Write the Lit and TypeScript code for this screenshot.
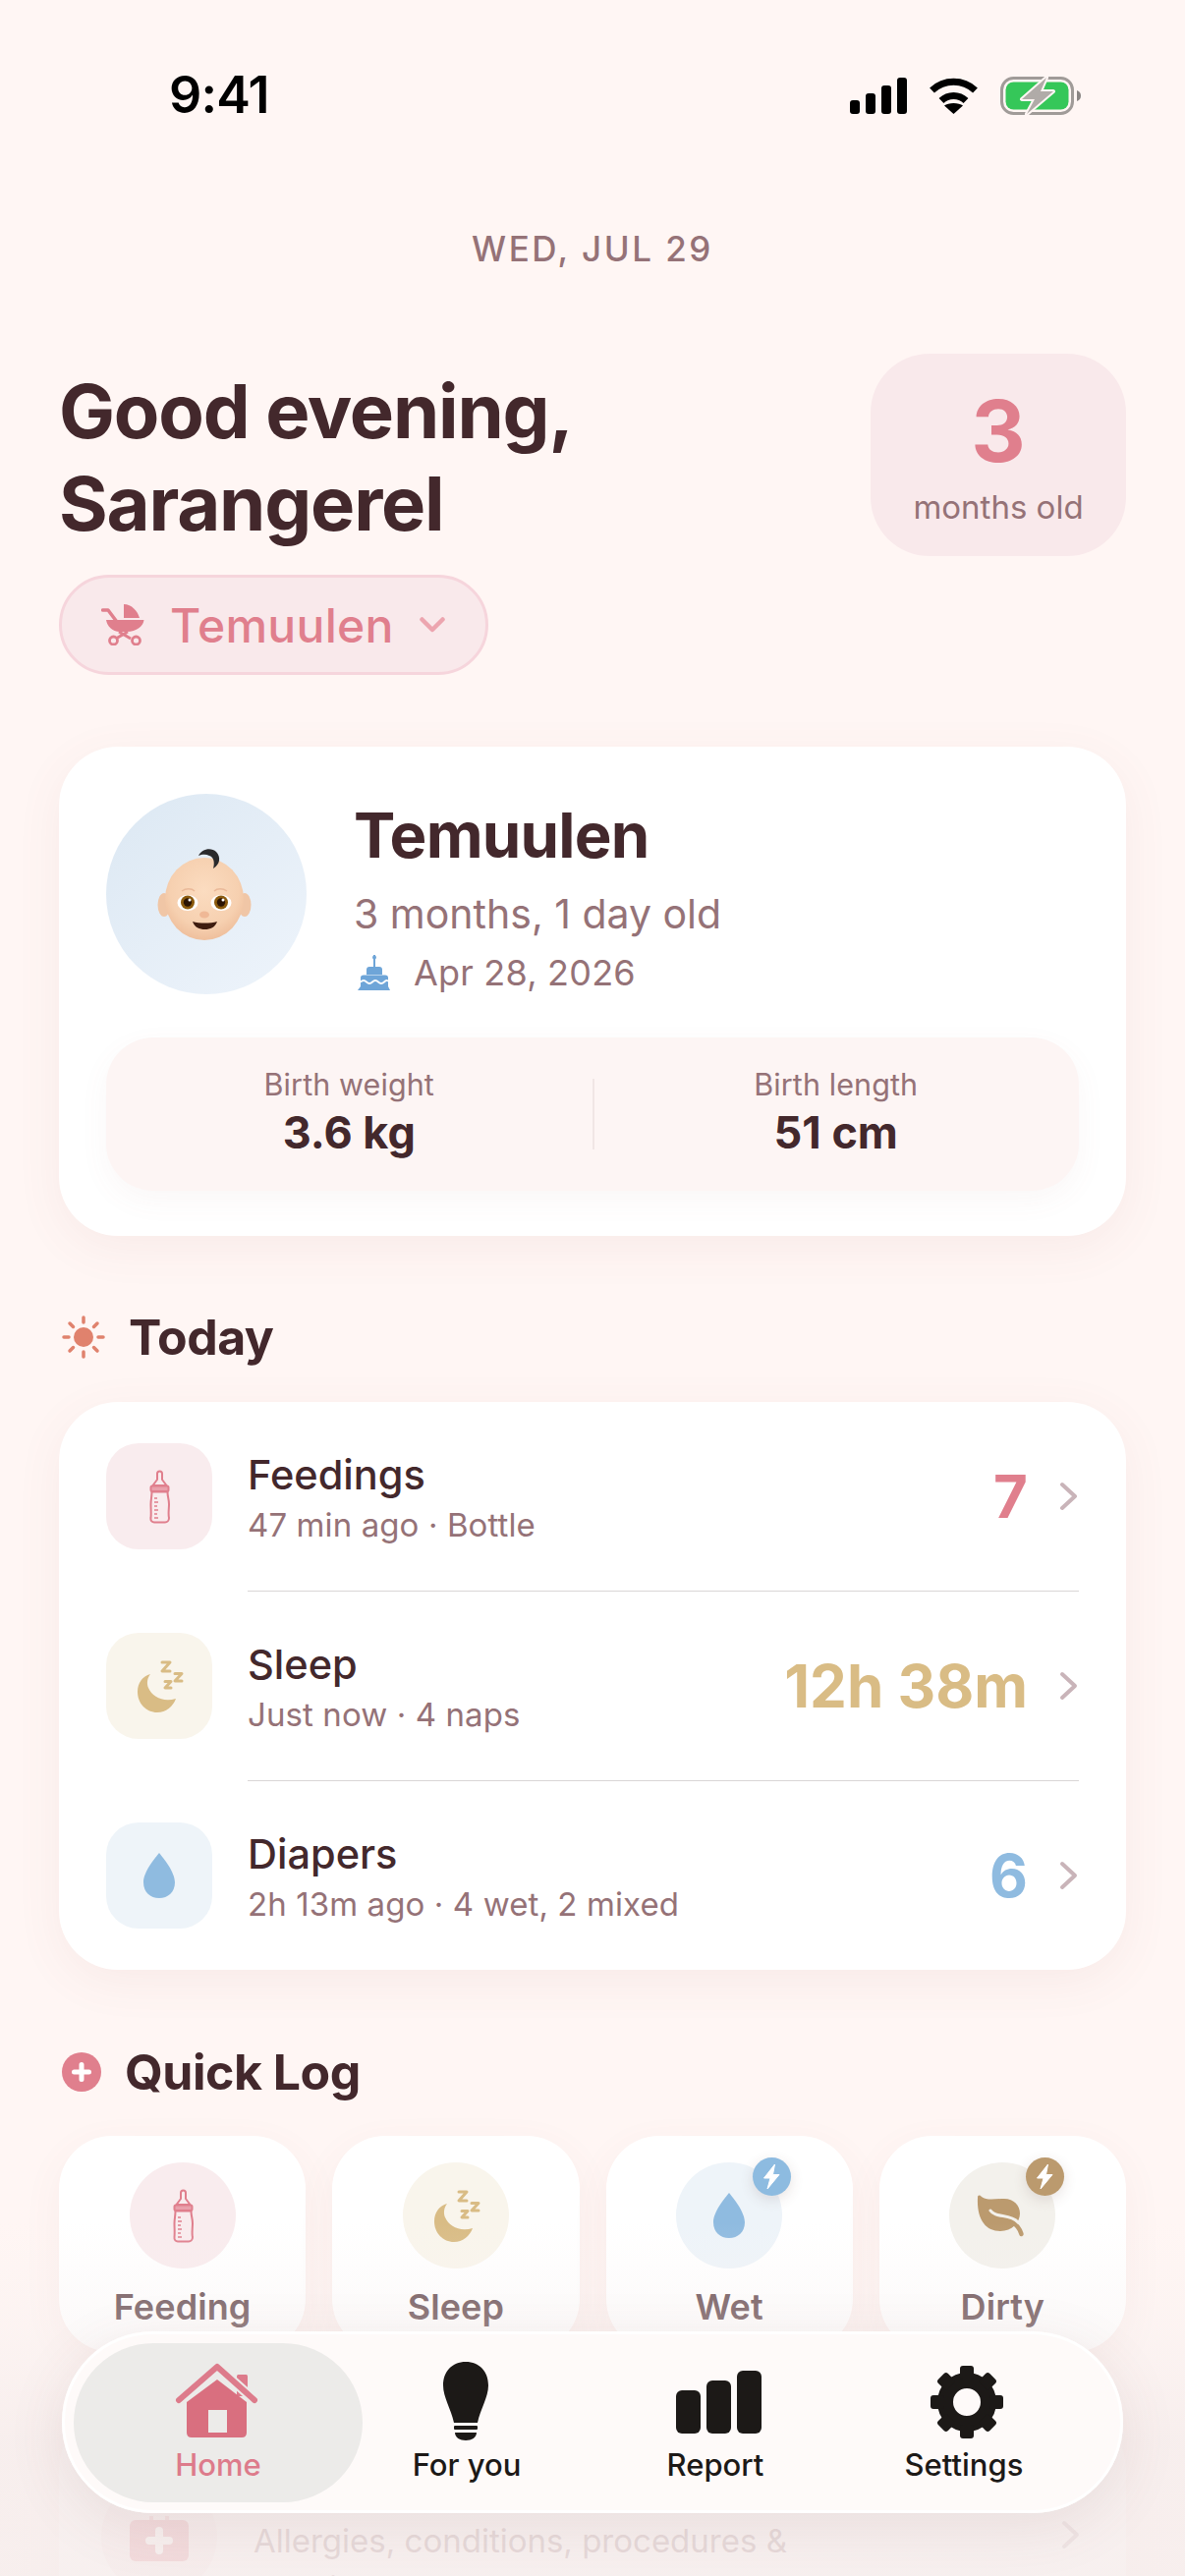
import { LitElement, html, svg, css } from "lit";
import { customElement } from "lit/decorators.js";

const bottle = html`<svg class="glyph" viewBox="0 0 108 108" fill="none" stroke="#e07f8d" stroke-width="2" stroke-linejoin="round"><path d="M52 37V31C52 27.500 57 27.500 57 31V37L61.500 43H47.500Z"/><rect x="45.500" y="43.500" width="18" height="5.500" rx="1.500" fill="#e9a0ab"/><path d="M46.500 49.500H62.500C62.500 55 64 57 64 62C64 67 63 72 64 76C64 79 62 80.500 60 80.500H49C47 80.500 45 79 45.500 76C46 72 45.500 67 45.500 62C45.500 57 46.500 55 46.500 49.500Z"/><path d="M49 56H52M49 60H53M49 64H52M49 68H53M49 72H52M49 76H53" stroke-width="1.500"/></svg>`;
const moon = html`<svg class="glyph" viewBox="0 0 108 108" fill="none"><path fill="#d9bc85" d="M45 42C37 44 32 51 32 60C32 72 41 81 52 81C61 81 68 75 71 67C58 71 47 65 43 56C41 51 42 46 45 42Z"/><path stroke="#d9bc85" stroke-width="3" stroke-linejoin="round" stroke-linecap="round" d="M57 30H65L57 39H65M70 41.500H77L70 49H77M60 49.500H66L60 56H66"/></svg>`;
const drop = html`<svg class="glyph" viewBox="0 0 108 108"><path fill="#8fbbe0" d="M54 31C58 36 70 50 70 61C70 71 63 77 54 77C45 77 38 71 38 61C38 50 50 36 54 31Z"/></svg>`;
const leaf = html`<svg class="glyph" viewBox="0 0 108 108" fill="none"><path fill="#bb9a6e" d="M29 36C29 33 31 33 33 35C38 39 47 37 56 37C66 37 72 44 72 52C72 61 64 70 52 70C37 70 28 58 29 36Z"/><path stroke="#bb9a6e" stroke-width="4.500" stroke-linecap="round" d="M64 61C68 63 72 68 73.500 73"/><path stroke="#f3f1ec" stroke-width="3" stroke-linecap="round" d="M42 49C47 57 62 52 70 61"/></svg>`;
const bolt = html`<svg viewBox="0 0 39 39"><path fill="#fff" d="M22.500 7L11.500 21H18L15 32L27 17.500H20.500Z" stroke="#fff" stroke-width="1" stroke-linejoin="round"/></svg>`;
const chevron = html`<svg class="chev" viewBox="0 0 21 30" fill="none"><path d="M4 3L17 15L4 27" stroke="#c9b4b9" stroke-width="4" stroke-linecap="round" stroke-linejoin="round"/></svg>`;

const teeth = [0, 45, 90, 135, 180, 225, 270, 315];

const rows = [
  { tint: "rose", icon: bottle, title: "Feedings", sub: "47 min ago · Bottle", value: "7", color: "rose" },
  { tint: "gold", icon: moon, title: "Sleep", sub: "Just now · 4 naps", value: "12h 38m", color: "gold" },
  { tint: "blue", icon: drop, title: "Diapers", sub: "2h 13m ago · 4 wet, 2 mixed", value: "6", color: "blue" },
];

const quick = [
  { tint: "rose", icon: bottle, label: "Feeding", badge: "" },
  { tint: "gold", icon: moon, label: "Sleep", badge: "" },
  { tint: "blue", icon: drop, label: "Wet", badge: "badge-blue" },
  { tint: "brown", icon: leaf, label: "Dirty", badge: "badge-brown" },
];

@customElement("app-root")
export class AppRoot extends LitElement {
  static styles = css`
    :host { display: block; }
    * { box-sizing: border-box; }
    .screen {
      position: relative; width: 1206px; height: 2622px; overflow: hidden;
      background: #fff6f4; color: #43282c;
      font-family: Inter, "Noto Sans", sans-serif;
    }
    .status { height: 194px; display: flex; align-items: center; justify-content: space-between; padding: 0 106px 0 172px; }
    .time { font-size: 52px; font-weight: 600; color: #000; line-height: 60px; letter-spacing: -0.8px; }
    .status-icons { display: flex; align-items: center; margin-top: 1px; }
    .status-icons svg { display: block; }
    .wifi { margin: 0 22px; }
    .date { margin-top: 37px; margin-bottom: -1px; text-align: center; font-size: 35px; line-height: 44px; font-weight: 500; letter-spacing: 2.5px; color: #957277; }
    .head { margin-top: 86px; padding: 0 60px; display: flex; justify-content: space-between; align-items: flex-start; }
    h1 { margin: 11px 0 0; font-size: 76px; line-height: 94px; font-weight: 700; letter-spacing: -1.2px; }
    .pill { margin-top: 26px; display: inline-flex; align-items: center; height: 102px; padding: 0 41px 0 40px; gap: 26px; background: #f9e9eb; border: 3px solid #f6d5dc; border-radius: 51px; color: #e07f8d; font-size: 48px; font-weight: 500; letter-spacing: 0.3px; }
    .pill svg { display: block; }
    .age { width: 260px; height: 206px; border-radius: 60px; background: #f9e9eb; display: flex; flex-direction: column; align-items: center; }
    .age b { margin-top: 34px; font-size: 86px; line-height: 90px; font-weight: 700; color: #e07f8d; }
    .age span { margin-top: 11px; font-size: 33px; line-height: 42px; color: #957277; }
    .card { background: #fff; border-radius: 60px; box-shadow: 0 12px 48px rgba(150, 90, 90, 0.07); margin: 0 60px; }
    .profile { margin-top: 73px; padding: 48px; height: 498px; }
    .who { display: flex; gap: 48px; }
    .avatar { width: 204px; height: 204px; border-radius: 50%; background: linear-gradient(140deg, #dce8f3, #eef4fb); display: flex; align-items: center; justify-content: center; }
    .avatar svg { display: block; margin-left: -2px; margin-top: 2px; }
    .name { margin-top: 2px; font-size: 63.5px; line-height: 80px; font-weight: 700; letter-spacing: -0.8px; }
    .age-line { margin-top: 15px; font-size: 41px; line-height: 50px; color: #957277; }
    .born { margin-top: 11px; display: flex; align-items: center; gap: 21px; font-size: 36px; line-height: 48px; color: #957277; letter-spacing: 0.2px; padding-left: 2px; }
    .stats { margin-top: 42px; height: 156px; border-radius: 48px; background: #fdf5f4; box-shadow: 0 10px 30px rgba(150, 90, 90, 0.05); display: grid; grid-template-columns: 1fr 1px 1fr; align-items: center; text-align: center; }
    .stat { padding-bottom: 5px; }
    .rule { width: 2px; height: 72px; background: #f1e6e5; }
    .stat-l { font-size: 30.5px; line-height: 40px; color: #957277; letter-spacing: 0.1px; }
    .stat-v { margin-top: 3px; font-size: 45px; line-height: 52px; font-weight: 700; }
    .sec { display: flex; align-items: center; padding-left: 63px; height: 60px; font-size: 50px; font-weight: 700; letter-spacing: -0.5px; }
    .sec svg { display: block; }
    .sec-today { margin-top: 73px; gap: 24px; }
    .sec-quick { margin-top: 74px; gap: 24px; }
    .list { margin-top: 36px; }
    .row { height: 192px; display: flex; align-items: center; padding: 0 48px; gap: 36px; }
    .tile { width: 108px; height: 108px; border-radius: 33px; flex: none; position: relative; }
    .glyph { display: block; width: 108px; height: 108px; }
    .rose { background: #f9ecee; }
    .gold { background: #f9f5ec; }
    .blue { background: #eef4f9; }
    .brown { background: #f3f1ec; }
    .text { flex: 1; padding-top: 3px; }
    .title { font-size: 41.500px; line-height: 52px; font-weight: 500; }
    .sub { margin-top: 3px; font-size: 33px; line-height: 44px; color: #957277; letter-spacing: 0.1px; }
    .val { font-size: 60px; font-weight: 700; line-height: 70px; margin-right: -1px; }
    .val.rose { background: none; color: #e07f8d; }
    .val.gold { background: none; color: #d9bc85; }
    .val.blue { background: none; color: #8fbbe0; }
    .chev { display: block; width: 21px; height: 30px; flex: none; margin-left: -4px; }
    .sep { height: 1px; margin: 0 48px 0 192px; background: #d9d6d6; }
    .quick { margin: 35px 60px 0; display: grid; grid-template-columns: repeat(4, 1fr); gap: 27px; }
    .q { height: 220px; background: #fff; border-radius: 54px; box-shadow: 0 12px 40px rgba(150, 90, 90, 0.06); display: flex; flex-direction: column; align-items: center; padding-top: 27px; }
    .circle { width: 108px; height: 108px; border-radius: 50%; position: relative; }
    .q-label { margin-top: 17px; font-size: 36px; line-height: 44px; font-weight: 600; color: #6a5054; letter-spacing: 0.1px; }
    .badge { position: absolute; top: -5px; right: -9px; width: 39px; height: 39px; border-radius: 50%; box-shadow: 0 4px 14px rgba(90, 60, 50, 0.14); }
    .badge svg { display: block; }
    .badge-blue { background: #8dbbe0; }
    .badge-brown { background: #bb9a6e; }
    .history { margin-top: 60px; height: 300px; display: flex; align-items: flex-start; padding: 69px 46px 0 43px; gap: 37px; }
    .kit-tile { width: 118px; height: 118px; flex: none; border-radius: 50%; background: #f9ecee; display: flex; align-items: center; justify-content: center; }
    .kit-tile svg { display: block; margin-top: 2px; }
    .hist-text { flex: 1; margin-top: 39px; font-size: 33px; line-height: 48px; color: #957277; }
    .hist-text span { display: block; }
    .hist-chev { margin-top: 42px; }
    .veil { position: absolute; left: 0; right: 0; bottom: 0; height: 360px; pointer-events: none; background: linear-gradient(rgba(246, 238, 237, 0), rgba(246, 238, 237, 0.3) 30%, rgba(246, 237, 236, 0.84) 62%); }
    .nav { position: absolute; left: 63px; bottom: 64px; width: 1080px; height: 185px; border-radius: 92px; background: #fefaf9; box-shadow: inset 0 0 0 3px rgba(255, 255, 255, 0.9), 0 14px 60px rgba(110, 70, 70, 0.1); display: grid; grid-template-columns: repeat(4, 253px); padding: 12px 0 11px 32.5px; }
    .item { display: flex; flex-direction: column; align-items: center; padding-top: 19px; color: #1c1917; font-size: 31px; font-weight: 500; }
    .item svg { display: block; }
    .item span { margin-top: 7px; line-height: 36px; }
    .home { margin: 0 -20.5px; border-radius: 81px; background: #ecebe9; color: #dd7b8b; }
  `;

  render() {
    return html`<div class="screen">
      <div class="status">
        <div class="time">9:41</div>
        <div class="status-icons">
          <svg width="58" height="37" viewBox="0 0 58 37" fill="#000"><rect y="23" width="10" height="14" rx="3"/><rect x="16" y="16" width="10" height="21" rx="3"/><rect x="32" y="8" width="10" height="29" rx="3"/><rect x="48" width="10" height="37" rx="3"/></svg>
          <svg class="wifi" width="51" height="37" viewBox="0 0 51 37" fill="none"><path d="M3.500 13A32 32 0 0 1 47.500 13" stroke="#000" stroke-width="7"/><path d="M13 23.500A18 18 0 0 1 38 23.500" stroke="#000" stroke-width="7"/><path d="M25.500 37L16 28.500C20 25 31 25 35 28.500Z" fill="#000"/></svg>
          <svg width="82" height="39" viewBox="0 0 82 39" fill="none"><rect x="1.500" y="1.500" width="72" height="36" rx="12" stroke="#a09b98" stroke-width="3"/><rect x="5.500" y="5.500" width="64" height="28" rx="8" fill="#35c759"/><path d="M78 14C81 15 82 17 82 19.500C82 22 81 24 78 25Z" fill="#8a8583"/><path d="M47 1L22 23H35L27 38L54 15H41Z" fill="#b0aba8" stroke="#fff6f4" stroke-width="4" stroke-linejoin="round" paint-order="stroke"/></svg>
        </div>
      </div>

      <div class="date">WED, JUL 29</div>

      <div class="head">
        <div>
          <h1>Good evening,<br />Sarangerel</h1>
          <div class="pill">
            <svg width="44" height="42" viewBox="0 0 44 42" fill="none"><path d="M23 0C31 0 37 7 39 14H23Z" fill="#e07f8d"/><path d="M1.500 6H7L16 18" stroke="#e07f8d" stroke-width="3.500" stroke-linecap="round" stroke-linejoin="round"/><path d="M5 16H43.500C43 22 36 28 26 28H19C11 28 6 22 5 16Z" fill="#e07f8d"/><path d="M18 28L30 35M27 28L15 35" stroke="#e07f8d" stroke-width="3"/><circle cx="12.500" cy="37" r="4" stroke="#e07f8d" stroke-width="2.800"/><circle cx="35.500" cy="37" r="4" stroke="#e07f8d" stroke-width="2.800"/></svg>
            <span>Temuulen</span>
            <svg width="26" height="16" viewBox="0 0 26 16" fill="none"><path d="M2.500 2.500L13 13L23.500 2.500" stroke="#eca5af" stroke-width="4.500" stroke-linecap="round" stroke-linejoin="round"/></svg>
          </div>
        </div>
        <div class="age"><b>3</b><span>months old</span></div>
      </div>

      <div class="card profile">
        <div class="who">
          <div class="avatar">
            <svg width="100" height="100" viewBox="0 0 100 100">
              <defs><radialGradient id="skin" cx="50%" cy="40%" r="62%"><stop offset="0%" stop-color="#fbdcc0"/><stop offset="70%" stop-color="#f6d0b0"/><stop offset="100%" stop-color="#eebd9a"/></radialGradient></defs>
              <ellipse cx="8" cy="60" rx="6.500" ry="12" fill="#f0c6a6"/><ellipse cx="90" cy="60" rx="6.500" ry="12" fill="#f0c6a6"/>
              <ellipse cx="49" cy="54" rx="40" ry="42" fill="url(#skin)"/>
              <path d="M43 10C46 3 56 1 61 6C66 11 65 19 58 23C60 16 58 11 54 10C50 8 46 9 43 10Z" fill="#2a2a2c"/>
              <path d="M26 46C30 43 36 43 39 46M59 46C62 43 68 43 72 46" stroke="#eab999" stroke-width="1.500" fill="none"/>
              <ellipse cx="32" cy="58" rx="10.500" ry="8" fill="#fff"/><ellipse cx="66" cy="58" rx="10.500" ry="8" fill="#fff"/>
              <circle cx="32" cy="57.500" r="7" fill="#8a5a0e"/><circle cx="66" cy="57.500" r="7" fill="#8a5a0e"/>
              <circle cx="32" cy="57.500" r="4.200" fill="#2b1505"/><circle cx="66" cy="57.500" r="4.200" fill="#2b1505"/>
              <circle cx="34" cy="55" r="1.500" fill="#fff"/><circle cx="68" cy="55" r="1.500" fill="#fff"/>
              <ellipse cx="49" cy="70" rx="5" ry="3.500" fill="#efb896"/>
              <path d="M37 77C44 79 55 79 62 77C60 83 55 85 49.500 85C44 85 39 83 37 77Z" fill="#3e1c0f"/>
            </svg>
          </div>
          <div>
            <div class="name">Temuulen</div>
            <div class="age-line">3 months, 1 day old</div>
            <div class="born">
              <svg width="38" height="36" viewBox="0 0 38 36" fill="#6ea5d8"><rect x="18" y="0" width="2" height="12"/><circle cx="19" cy="2.500" r="2"/><path d="M11 15Q11 12 14 12H24Q27 12 27 15V20H11Z"/><path d="M5 23Q5 20.500 8 20.500H30Q33 20.500 33 23V32L35 36H2L5 32Z"/><path d="M5 27.500Q8 24.500 11 27.500T17 27.500T23 27.500T29 27.500T33 27" fill="none" stroke="#fff" stroke-width="1.800"/></svg>
              <span>Apr 28, 2026</span>
            </div>
          </div>
        </div>
        <div class="stats">
          <div class="stat"><div class="stat-l">Birth weight</div><div class="stat-v">3.6 kg</div></div>
          <div class="rule"></div>
          <div class="stat"><div class="stat-l">Birth length</div><div class="stat-v">51 cm</div></div>
        </div>
      </div>

      <div class="sec sec-today">
        <svg width="44" height="44" viewBox="0 0 44 44" fill="#e0826d" stroke="#e0826d" stroke-linecap="round"><circle cx="22" cy="22" r="10" stroke="none"/><path stroke-width="3.500" fill="none" d="M22 2V7M22 37V42M2 22H7M37 22H42M8 8L11.500 11.500M32.500 32.500L36 36M8 36L11.500 32.500M32.500 11.500L36 8"/></svg>
        <span>Today</span>
      </div>

      <div class="card list">
        ${rows.map((r, i) => html`
          ${i ? html`<div class="sep"></div>` : ""}
          <div class="row">
            <div class="tile ${r.tint}">${r.icon}</div>
            <div class="text"><div class="title">${r.title}</div><div class="sub">${r.sub}</div></div>
            <div class="val ${r.color}">${r.value}</div>
            ${chevron}
          </div>`)}
      </div>

      <div class="sec sec-quick">
        <svg width="40" height="40" viewBox="0 0 40 40"><circle cx="20" cy="20" r="20" fill="#e07f8d"/><path d="M20 12.500V27.500M12.500 20H27.500" stroke="#fff" stroke-width="5" stroke-linecap="round"/></svg>
        <span>Quick Log</span>
      </div>

      <div class="quick">
        ${quick.map((q) => html`<div class="q">
          <div class="circle ${q.tint}">
            ${q.icon}
            ${q.badge ? html`<div class="badge ${q.badge}">${bolt}</div>` : ""}
          </div>
          <div class="q-label">${q.label}</div>
        </div>`)}
      </div>

      <div class="card history">
        <div class="kit-tile">
          <svg width="60" height="48" viewBox="0 0 60 48"><path d="M20 7V2H24V7M36 7V2H40V7" fill="#e9a6ae"/><rect y="6" width="60" height="42" rx="6" fill="#e07f8d"/><path d="M30 17V37M20 27H40" stroke="#fff" stroke-width="8" stroke-linecap="round"/></svg>
        </div>
        <div class="hist-text"><span>Allergies, conditions, procedures &amp;</span><span>hospital stays</span></div>
        <svg class="chev hist-chev" viewBox="0 0 21 30" fill="none"><path d="M4 3L17 15L4 27" stroke="#c9b4b9" stroke-width="4" stroke-linecap="round" stroke-linejoin="round"/></svg>
      </div>

      <div class="veil"></div>

      <nav class="nav">
        <div class="item home">
          <svg width="100" height="80" viewBox="0 0 100 80" fill="none">
            <rect x="69" y="13" width="11" height="22" rx="1.500" fill="#dd7b8b"/>
            <path d="M49 18L79 41V72Q79 77 74 77H23Q18 77 18 72V41Z" fill="#d96f7f"/>
            <rect x="40" y="49" width="19" height="23" fill="#ecebe9"/>
            <path d="M10 39L49 5L87 39" stroke="#ecebe9" stroke-width="10" stroke-linejoin="round"/>
            <path d="M10 39L49 5L87 39" stroke="#dd7b8b" stroke-width="6" stroke-linecap="round" stroke-linejoin="round"/>
          </svg>
          <span>Home</span>
        </div>
        <div class="item">
          <svg width="100" height="80" viewBox="0 0 100 80" fill="#1c1917"><path d="M49 0C63 0 72 10 72 24C72 36 64 48 61 62H37C34 48 26 36 26 24C26 10 35 0 49 0Z"/><rect x="37" y="65" width="24" height="4" rx="1"/><path d="M38 72H60C60 77 55 80 49 80C43 80 38 77 38 72Z"/></svg>
          <span>For you</span>
        </div>
        <div class="item">
          <svg width="100" height="80" viewBox="0 0 100 80" fill="#1c1917"><rect x="10" y="29" width="25" height="44" rx="6"/><rect x="41" y="19" width="25" height="54" rx="6"/><rect x="72" y="9" width="25" height="64" rx="6"/></svg>
          <span>Report</span>
        </div>
        <div class="item">
          <svg width="100" height="80" viewBox="0 0 100 80" fill="none">
            <circle cx="53" cy="41" r="22" stroke="#1c1917" stroke-width="16"/>
            ${teeth.map((a) => svg`<rect x="46" y="4" width="14" height="14" rx="3" fill="#1c1917" transform="rotate(${a} 53 41)"/>`)}
          </svg>
          <span>Settings</span>
        </div>
      </nav>
    </div>`;
  }
}
